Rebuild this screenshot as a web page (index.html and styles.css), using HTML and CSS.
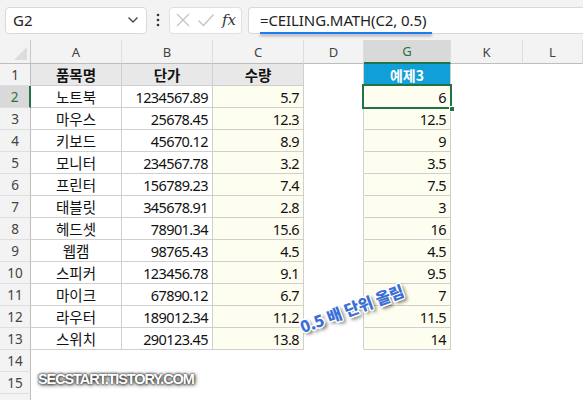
FILE: index.html
```html
<!DOCTYPE html>
<html lang="ko">
<head>
<meta charset="utf-8">
<link rel="stylesheet" href="styles.css">
</head>
<body>
<div class="app">
  <div class="toolbar">
    <div class="namebox"><span class="nb-text">G2</span>
      <svg class="chev" width="12" height="8" viewBox="0 0 12 8"><path d="M1.5 1.5 L6 6 L10.5 1.5" fill="none" stroke="#444" stroke-width="1.3"/></svg>
    </div>
    <div class="dots">
      <svg width="4" height="14" viewBox="0 0 4 14"><circle cx="2" cy="2" r="1.3" fill="#333"/><circle cx="2" cy="7" r="1.3" fill="#333"/><circle cx="2" cy="12" r="1.3" fill="#333"/></svg>
    </div>
    <div class="fxbox">
      <svg width="16" height="16" viewBox="0 0 16 16"><path d="M2 2 L14 14 M14 2 L2 14" stroke="#c4c4c4" stroke-width="1.3" fill="none"/></svg>
      <svg width="18" height="16" viewBox="0 0 18 16"><path d="M1.5 8.5 L6.5 13.5 L16.5 2.5" stroke="#c4c4c4" stroke-width="1.3" fill="none"/></svg>
      <span class="fx">fx</span>
    </div>
    <div class="formula"><span class="ftext">=CEILING.MATH(C2, 0.5)</span></div>
  </div>

  <div class="sheet">
    <div class="corner"><span class="tri"></span></div>
    <div class="ch">A</div><div class="ch">B</div><div class="ch">C</div><div class="ch">D</div><div class="ch sel">G</div><div class="ch">K</div><div class="ch">L</div>

    <div class="rh">1</div><div class="c b hd">품목명</div><div class="c b hd">단가</div><div class="c b hd">수량</div><div class="c br"></div><div class="c b blue">예제3</div><div class="c"></div><div class="c"></div>
    <div class="rh sel">2</div><div class="c b ctr">노트북</div><div class="c b num">1234567.89</div><div class="c b num y">5.7</div><div class="c br"></div><div class="c b num y">6</div><div class="c"></div><div class="c"></div>
    <div class="rh">3</div><div class="c b ctr">마우스</div><div class="c b num">25678.45</div><div class="c b num y">12.3</div><div class="c br"></div><div class="c b num y">12.5</div><div class="c"></div><div class="c"></div>
    <div class="rh">4</div><div class="c b ctr">키보드</div><div class="c b num">45670.12</div><div class="c b num y">8.9</div><div class="c br"></div><div class="c b num y">9</div><div class="c"></div><div class="c"></div>
    <div class="rh">5</div><div class="c b ctr">모니터</div><div class="c b num">234567.78</div><div class="c b num y">3.2</div><div class="c br"></div><div class="c b num y">3.5</div><div class="c"></div><div class="c"></div>
    <div class="rh">6</div><div class="c b ctr">프린터</div><div class="c b num">156789.23</div><div class="c b num y">7.4</div><div class="c br"></div><div class="c b num y">7.5</div><div class="c"></div><div class="c"></div>
    <div class="rh">7</div><div class="c b ctr">태블릿</div><div class="c b num">345678.91</div><div class="c b num y">2.8</div><div class="c br"></div><div class="c b num y">3</div><div class="c"></div><div class="c"></div>
    <div class="rh">8</div><div class="c b ctr">헤드셋</div><div class="c b num">78901.34</div><div class="c b num y">15.6</div><div class="c br"></div><div class="c b num y">16</div><div class="c"></div><div class="c"></div>
    <div class="rh">9</div><div class="c b ctr">웹캠</div><div class="c b num">98765.43</div><div class="c b num y">4.5</div><div class="c br"></div><div class="c b num y">4.5</div><div class="c"></div><div class="c"></div>
    <div class="rh">10</div><div class="c b ctr">스피커</div><div class="c b num">123456.78</div><div class="c b num y">9.1</div><div class="c br"></div><div class="c b num y">9.5</div><div class="c"></div><div class="c"></div>
    <div class="rh">11</div><div class="c b ctr">마이크</div><div class="c b num">67890.12</div><div class="c b num y">6.7</div><div class="c br"></div><div class="c b num y">7</div><div class="c"></div><div class="c"></div>
    <div class="rh">12</div><div class="c b ctr">라우터</div><div class="c b num">189012.34</div><div class="c b num y">11.2</div><div class="c br"></div><div class="c b num y">11.5</div><div class="c"></div><div class="c"></div>
    <div class="rh">13</div><div class="c b ctr">스위치</div><div class="c b num">290123.45</div><div class="c b num y">13.8</div><div class="c br"></div><div class="c b num y">14</div><div class="c"></div><div class="c"></div>
    <div class="rh">14</div><div class="c"></div><div class="c"></div><div class="c"></div><div class="c"></div><div class="c"></div><div class="c"></div><div class="c"></div>
    <div class="rh">15</div><div class="c"></div><div class="c"></div><div class="c"></div><div class="c"></div><div class="c"></div><div class="c"></div><div class="c"></div>
    <div class="rh"></div><div class="c"></div><div class="c"></div><div class="c"></div><div class="c"></div><div class="c"></div><div class="c"></div><div class="c"></div>
  </div>

  <div class="underline"></div>
  <div class="selbox"><span class="handle"></span></div>
  <div class="note">0.5 배 단위 올림</div>
  <div class="wm">SECSTART.TISTORY.COM</div>
</div>
</body>
</html>
```

FILE: styles.css
```css
* { box-sizing: border-box; }
html, body { margin: 0; padding: 0; background: #fff; }
body { width: 583px; height: 400px; overflow: hidden; font-family: "Noto Sans", "Noto Sans CJK KR", sans-serif; }
.app { position: relative; width: 583px; height: 400px; overflow: hidden; }

.toolbar { height: 40px; background: #f3f3f3; display: flex; align-items: center; padding-left: 5px; padding-bottom: 0; }
.namebox { width: 142px; height: 27px; background: #fff; border: 1px solid #d9d9d9; border-radius: 4px; display: flex; align-items: center; justify-content: space-between; padding: 0 7px 0 7px; }
.nb-text { font-size: 15px; color: #222; }
.dots { width: 22px; display: flex; justify-content: center; align-items: center; }
.fxbox { width: 73px; height: 27px; background: #fff; border: 1px solid #e0e0e0; border-radius: 4px; display: flex; align-items: center; justify-content: space-between; padding: 0 5px 0 5px; }
.fx { font-family: "DejaVu Serif", "Liberation Serif", serif; font-style: italic; font-size: 15px; color: #333; }
.formula { margin-left: 6px; flex: 1; height: 27px; background: #fff; border: 1px solid #d9d9d9; border-right: none; border-radius: 4px 0 0 4px; display: flex; align-items: center; padding-left: 11px; }
.ftext { font-size: 15px; color: #222; letter-spacing: -0.1px; }

.sheet { display: grid; grid-template-columns: 31px 91px 91px 91px 60px 87px 72px 1fr; grid-template-rows: 24px; grid-auto-rows: 22px; }
.corner { background: #f3f3f3; border-right: 1px solid #c8c8c8; border-bottom: 1px solid #bdbdbd; position: relative; }
.tri { position: absolute; right: 3px; bottom: 3px; width: 0; height: 0; border-left: 13px solid transparent; border-bottom: 13px solid #dcdcdc; }
.ch { background: #f3f3f3; border-right: 1px solid #dedede; border-bottom: 1px solid #bdbdbd; display: flex; align-items: center; justify-content: center; font-size: 13px; color: #444; }
.ch.sel { background: #d9d9d9; color: #217346; border-bottom: 2px solid #217346; }
.rh { background: #f3f3f3; border-right: 1px solid #bdbdbd; border-bottom: 1px solid #dedede; display: flex; align-items: center; justify-content: center; font-size: 13.5px; color: #444; padding-top: 1px; }
.rh.sel { background: #d9d9d9; color: #217346; border-right: 2px solid #217346; }

.c { border-right: 1px solid transparent; border-bottom: 1px solid transparent; font-size: 14.5px; color: #111; display: flex; align-items: center; padding: 0 3px; white-space: nowrap; }
.c.b { border-right-color: #cfcfcf; border-bottom-color: #cfcfcf; }
.c.br { border-right-color: #cfcfcf; }
.hd { background: #e8e8e8; font-weight: 700; justify-content: center; font-family: "Noto Sans CJK KR", sans-serif; }
.blue { background: #109fd7; color: #fff; font-weight: 700; justify-content: center; font-family: "Noto Sans CJK KR", sans-serif; font-size: 14px; }
.ctr { justify-content: center; font-family: "Noto Sans CJK KR", sans-serif; font-weight: 400; }
.num { justify-content: flex-end; letter-spacing: -0.6px; padding-right: 4px; }
.y { background: #fefef0; }

.underline { position: absolute; left: 260px; top: 32px; width: 172px; height: 2px; background: #1a7cf0; box-shadow: 0 2px 3px rgba(0,0,0,0.35); }
.selbox { position: absolute; left: 362px; top: 84px; width: 90px; height: 25px; border: 2px solid #217346; }
.handle { position: absolute; right: -5px; bottom: -5px; width: 6px; height: 6px; background: #217346; border: 1px solid #fff; }

.note { position: absolute; left: 297px; top: 296px; font-family: "Noto Sans CJK KR", sans-serif; font-weight: 900; font-size: 16px; color: #3a6fd6; transform: rotate(-20deg); transform-origin: center; white-space: nowrap; letter-spacing: -0.3px;
  text-shadow: -1px -1px 0 #fff, 1px -1px 0 #fff, -1px 1px 0 #fff, 1px 1px 0 #fff, 0 -1.5px 0 #fff, 0 1.5px 0 #fff, -1.5px 0 0 #fff, 1.5px 0 0 #fff, 2px 3px 4px rgba(0,0,0,0.75); }
.wm { position: absolute; left: 38px; top: 371px; font-family: "Liberation Sans", Arial, sans-serif; font-weight: 700; font-size: 14.5px; letter-spacing: -1.1px; color: #fff;
  text-shadow: 0 0 2px #333, 0 0 3px #444, 1px 1px 4px #333; }
```
